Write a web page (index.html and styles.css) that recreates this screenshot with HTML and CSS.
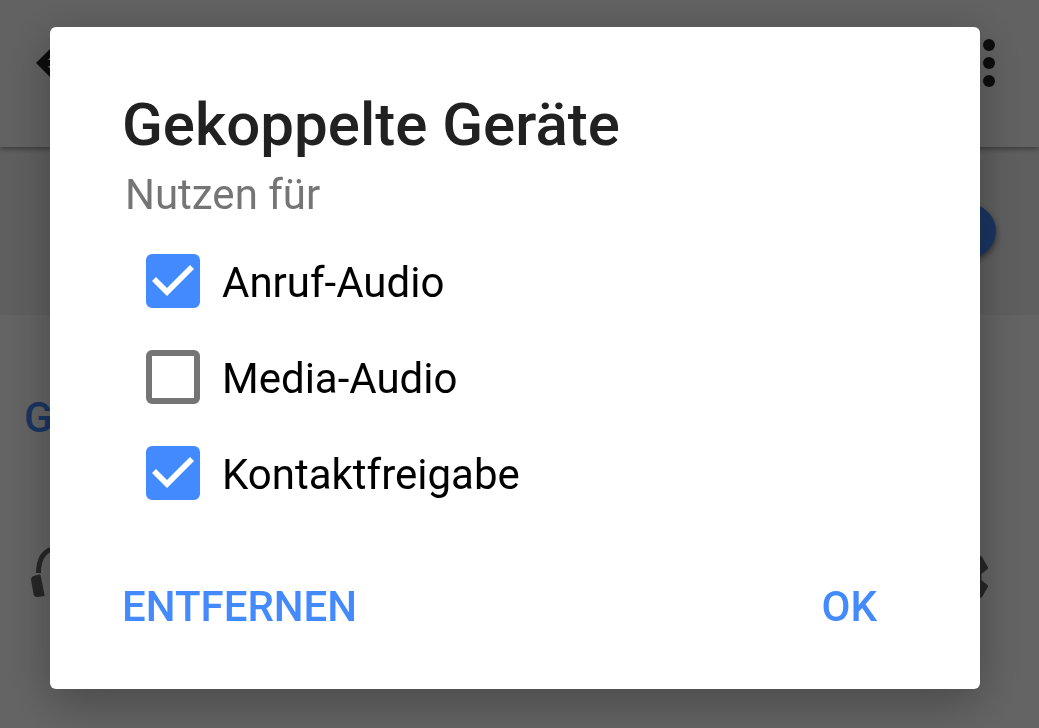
FILE: index.html
```
<!DOCTYPE html>
<html lang="de">
<head>
	<meta charset="UTF-8" />
	<meta name="viewport" content="width=device-width, initial-scale=1" />
<title>Bluetooth</title>
<link rel="stylesheet" href="styles.css">
</head>
<body>
<div class="page">
	<header class="appbar">
		<button class="icon-btn" type="button" aria-label="Zurück">
			<svg viewBox="0 0 24 24"><path d="M20 11H7.83l5.59-5.59L12 4l-8 8 8 8 1.41-1.41L7.83 13H20v-2z"/></svg>
		</button>
		<button class="icon-btn" type="button" aria-label="Menü">
			<svg viewBox="0 0 24 24"><circle cx="12" cy="6" r="2"/><circle cx="12" cy="12" r="2"/><circle cx="12" cy="18" r="2"/></svg>
		</button>
	</header>
	<div class="switchbar">
		<input class="switch" type="checkbox" aria-label="Bluetooth" checked />
	</div>
	<main class="devices">
		<h2 class="devices-title">G</h2>
		<div class="device">
			<svg class="device-icon" viewBox="0 0 72 72">
				<path class="band" d="M14.500 32C14.500 20 19 11 28 8q8-2 16 0C53 11 57.500 20 57.500 32"/>
				<path d="M9.500 35l6-1.500q1 0 1.200 1l4 20.500-7 1q-3.500.5-4.200-3l-2.300-13q-.7-4 2.300-5z"/>
				<path d="M62.500 35l-6-1.500q-1 0-1.200 1l-4 20.500 7 1q3.500.5 4.200-3l2.300-13q.7-4-2.300-5z"/>
			</svg>
			<button class="icon-btn gear" type="button" aria-label="Einstellungen">
				<svg viewBox="0 0 24 24"><path d="M19.430 12.980c.04-.32.07-.64.07-.98s-.03-.66-.07-.98l2.110-1.650c.19-.15.24-.42.12-.64l-2-3.460c-.12-.22-.39-.3-.61-.22l-2.490 1c-.52-.4-1.080-.73-1.690-.98l-.38-2.650C14.460 2.180 14.250 2 14 2h-4c-.25 0-.46.18-.49.42l-.38 2.650c-.61.25-1.170.59-1.690.98l-2.490-1c-.23-.09-.49 0-.61.22l-2 3.460c-.13.22-.07.49.12.64l2.110 1.650c-.04.32-.07.65-.07.98s.03.66.07.98l-2.110 1.650c-.19.15-.24.42-.12.64l2 3.460c.12.22.39.3.61.22l2.490-1c.52.4 1.080.73 1.690.98l.38 2.650c.03.24.24.42.49.42h4c.25 0 .46-.18.49-.42l.38-2.650c.61-.25 1.170-.59 1.690-.98l2.490 1c.23.09.49 0 .61-.22l2-3.460c.12-.22.07-.49-.12-.64l-2.110-1.650zM12 15.500c-1.930 0-3.500-1.570-3.500-3.500s1.570-3.500 3.500-3.500 3.500 1.570 3.500 3.500-1.570 3.500-3.500 3.500z"/></svg>
			</button>
		</div>
	</main>
</div>

<div class="scrim">
	<form class="dialog" role="dialog" aria-labelledby="dialog-title">
		<h1 class="dialog-title" id="dialog-title">Gekoppelte Geräte</h1>
		<p class="dialog-sub">Nutzen für</p>
		<ul class="options">
			<li><label class="option"><input class="check" type="checkbox" checked /><span>Anruf-Audio</span></label></li>
			<li><label class="option"><input class="check" type="checkbox" /><span>Media-Audio</span></label></li>
			<li><label class="option"><input class="check" type="checkbox" checked /><span>Kontaktfreigabe</span></label></li>
		</ul>
		<div class="actions">
			<button class="action" type="button">ENTFERNEN</button>
			<button class="action" type="button">OK</button>
		</div>
	</form>
</div>
</body>
</html>
```
FILE: styles.css
```
*{margin:0;padding:0;box-sizing:border-box;}
ul{list-style-type:none;}
html,body{height:100%;overflow:hidden;}
body{font:400 42px/50px Roboto,sans-serif;color:#000;background:#fafafa;}
button{border:0;background:none;font:inherit;color:inherit;cursor:pointer;}
svg{display:block;}

/* settings page */
.page{min-height:100%;}
.appbar{position:relative;display:flex;justify-content:space-between;padding:27px 14px 48px 24px;background:#f5f5f5;box-shadow:0 1px 6px rgba(0,0,0,.5);}
.icon-btn{width:72px;height:72px;color:#212121;}
.icon-btn svg{width:72px;height:72px;fill:currentColor;}
.switchbar{display:flex;justify-content:flex-end;align-items:center;height:168px;padding:0 43px;background:#eee;}
.switch{appearance:none;width:54px;height:54px;border-radius:50%;background:#4285f4;box-shadow:0 3px 6px rgba(0,0,0,.5);}
.devices-title{padding:78px 24px 0;font-size:42px;font-weight:500;color:#4285f4;}
.device{display:flex;justify-content:space-between;align-items:center;padding:98px 44px 0 24px;}
.device-icon{width:72px;height:72px;fill:#616161;}
.device-icon .band{fill:none;stroke:#616161;stroke-width:5;}
.gear{color:#616161;}

/* dialog */
.scrim{position:fixed;top:0;right:0;bottom:0;left:0;display:flex;align-items:center;padding:27px 59px 39px 50px;background:rgba(0,0,0,.6);}
.dialog{width:100%;padding:62px 103px 57px 72px;border-radius:6px;background:#fff;box-shadow:0 12px 48px rgba(0,0,0,.3);}
.dialog-title{font-size:60px;line-height:72px;font-weight:500;color:#212121;}
.dialog-sub{margin-top:9px;padding-left:3px;color:#757575;}
.options{padding:13px 0 0 24px;}
.option{display:flex;align-items:center;gap:22px;height:96px;}
.option span{padding-top:4px;}
.check{appearance:none;flex:none;display:grid;place-items:center;width:54px;height:54px;border:6px solid #757575;border-radius:6px;cursor:pointer;}
.check:checked{border-color:#448aff;background:#448aff;}
.check:checked::before{content:"";width:42px;height:32px;background:#fff;clip-path:polygon(0 16px,4px 12px,15px 23px,38px 0,42px 4px,15px 31px);}
.actions{display:flex;justify-content:space-between;margin-top:61px;}
.action{font-weight:500;color:#448aff;}
```
